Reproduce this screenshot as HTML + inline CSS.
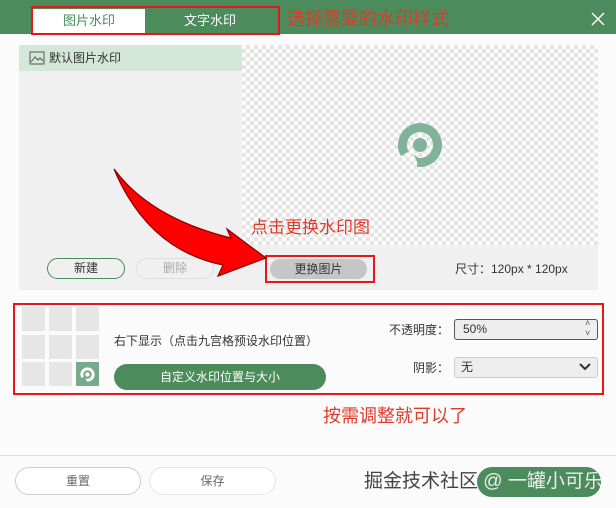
<!DOCTYPE html>
<html><head><meta charset="utf-8"><style>
*{margin:0;padding:0;box-sizing:border-box}
body{width:616px;height:508px;background:#fbfbfb;font-family:"Liberation Sans","Noto Sans CJK SC",sans-serif;position:relative;overflow:hidden;font-size:12px;color:#333}
.a{position:absolute}
.chk{background-color:#fff;background-image:linear-gradient(45deg,#e4e4e4 25%,transparent 25%,transparent 75%,#e4e4e4 75%),linear-gradient(45deg,#e4e4e4 25%,transparent 25%,transparent 75%,#e4e4e4 75%);background-size:8px 8px;background-position:0 0,4px 4px}
.cell{position:absolute;width:23px;height:24px;background:#e6e6e6}
</style></head><body>
<div class="a" style="left:0;top:0;width:616px;height:34px;background:#4b8b5c"></div>
<div class="a" style="left:33px;top:9px;width:112px;height:24px;background:#fff;color:#4b8b5c;font-size:13px;line-height:24px;text-align:center">图片水印</div>
<div class="a" style="left:145px;top:9px;width:130px;height:24px;color:#fff;font-size:13px;line-height:24px;text-align:center">文字水印</div>
<div class="a" style="left:31px;top:6px;width:249px;height:29px;border:2px solid #e8151a"></div>
<div class="a" style="left:287px;top:7px;font-size:18px;line-height:24px;color:#e03a2a">选择需要的水印样式</div>
<svg class="a" style="left:590px;top:11px" width="16" height="16"><path d="M2 2 L14 14 M14 2 L2 14" stroke="#fff" stroke-width="1.5"/></svg>

<div class="a" style="left:19px;top:45px;width:223px;height:245px;background:#f0f0f0"></div>
<div class="a" style="left:19px;top:45px;width:223px;height:26px;background:#d3e8d8"></div>
<svg class="a" style="left:29px;top:51px" width="16" height="14"><rect x="1" y="1" width="14" height="12" fill="none" stroke="#555"/><path d="M2 11 L6 6 L9 9 L11 7 L14 10" fill="none" stroke="#555"/></svg>
<div class="a" style="left:49px;top:50px;font-size:12px;line-height:16px;color:#333">默认图片水印</div>
<div class="a chk" style="left:242px;top:45px;width:356px;height:200px"></div>
<div class="a" style="left:242px;top:245px;width:356px;height:45px;background:#f0f0f0"></div>
<svg class="a" style="left:396px;top:121px" width="48" height="48" viewBox="0 0 48 48"><circle cx="24" cy="24" r="17.5" fill="none" stroke="#80b39a" stroke-width="9" stroke-dasharray="94 16" transform="rotate(150 24 24)"/><circle cx="24" cy="24" r="7" fill="#80b39a"/><path d="M18 33 L22 44 L28 42 Z" fill="#80b39a"/></svg>
<div class="a" style="left:47px;top:258px;width:78px;height:21px;border:1px solid #4b8b5c;border-radius:11px;text-align:center;line-height:19px;color:#333">新建</div>
<div class="a" style="left:136px;top:258px;width:78px;height:21px;border:1px solid #ddd;border-radius:11px;text-align:center;line-height:19px;color:#aaa">删除</div>
<div class="a" style="left:270px;top:259px;width:97px;height:20px;background:#c6c6c6;border-radius:10px;text-align:center;line-height:20px;color:#333">更换图片</div>
<div class="a" style="left:265px;top:255px;width:110px;height:28px;border:2px solid #e8151a"></div>
<div class="a" style="left:455px;top:261px;font-size:12px;line-height:16px;color:#333">尺寸：120px * 120px</div>
<div class="a" style="left:251px;top:217px;font-size:17px;line-height:22px;color:#e03a2a">点击更换水印图</div>
<svg class="a" style="left:0;top:0" width="616" height="300"><path d="M114 169 Q150 218 231 238 L227 229 L266 258 L218 276 L223 265 Q148 250 114 169Z" fill="#f00" stroke="#800" stroke-width="1.2"/></svg>

<div class="a" style="left:13px;top:303px;width:591px;height:92px;border:2px solid #e8151a"></div>
<div class="cell" style="left:22px;top:307px"></div><div class="cell" style="left:49px;top:307px"></div><div class="cell" style="left:76px;top:307px"></div>
<div class="cell" style="left:22px;top:335px"></div><div class="cell" style="left:49px;top:335px"></div><div class="cell" style="left:76px;top:335px"></div>
<div class="cell" style="left:22px;top:362px"></div><div class="cell" style="left:49px;top:362px"></div><div class="cell" style="left:76px;top:362px;background:#78a98a"></div>
<svg class="a" style="left:79px;top:366px" width="17" height="17" viewBox="0 0 48 48"><circle cx="24" cy="24" r="16" fill="none" stroke="#fff" stroke-width="8" stroke-dasharray="84 17" transform="rotate(150 24 24)"/><circle cx="24" cy="24" r="6" fill="#fff"/><path d="M18 33 L22 44 L28 42 Z" fill="#fff"/></svg>
<div class="a" style="left:114px;top:333px;font-size:12px;line-height:16px">右下显示（点击九宫格预设水印位置）</div>
<div class="a" style="left:114px;top:364px;width:212px;height:26px;background:#4b8b5c;border-radius:13px;color:#fff;text-align:center;line-height:26px">自定义水印位置与大小</div>
<div class="a" style="left:389px;top:322px;line-height:16px">不透明度：</div>
<div class="a" style="left:454px;top:319px;width:144px;height:21px;border:1px solid #555;border-radius:3px;background:#eee;padding-left:8px;line-height:19px">50%</div>
<div class="a" style="left:585px;top:318px;font-size:9px;line-height:10px;color:#555">˄<br>˅</div>
<div class="a" style="left:413px;top:360px;line-height:16px">阴影：</div>
<div class="a" style="left:454px;top:357px;width:144px;height:21px;border:1px solid #ccc;border-radius:3px;background:#eee;padding-left:6px;line-height:19px">无</div>
<svg class="a" style="left:578px;top:362px" width="14" height="10"><path d="M2 2 L7 7 L12 2" fill="none" stroke="#333" stroke-width="2"/></svg>
<div class="a" style="left:323px;top:404px;font-size:18px;line-height:24px;color:#e03a2a">按需调整就可以了</div>

<div class="a" style="left:0;top:455px;width:616px;height:1px;background:#e0e0e0"></div>
<div class="a" style="left:15px;top:467px;width:126px;height:28px;border:1px solid #ccc;border-radius:14px;background:#fff;text-align:center;line-height:26px;color:#666">重置</div>
<div class="a" style="left:149px;top:467px;width:127px;height:28px;border:1px solid #e4e4e4;border-radius:14px;background:#fff;text-align:center;line-height:26px;color:#666">保存</div>
<div class="a" style="left:477px;top:467px;width:124px;height:30px;background:#4b8b5c;border-radius:15px"></div>
<div class="a" style="left:364px;top:469px;font-size:19px;line-height:26px;color:#444;white-space:nowrap">掘金技术社区<span style="color:#eee"> @ 一罐小可乐</span></div>
</body></html>
